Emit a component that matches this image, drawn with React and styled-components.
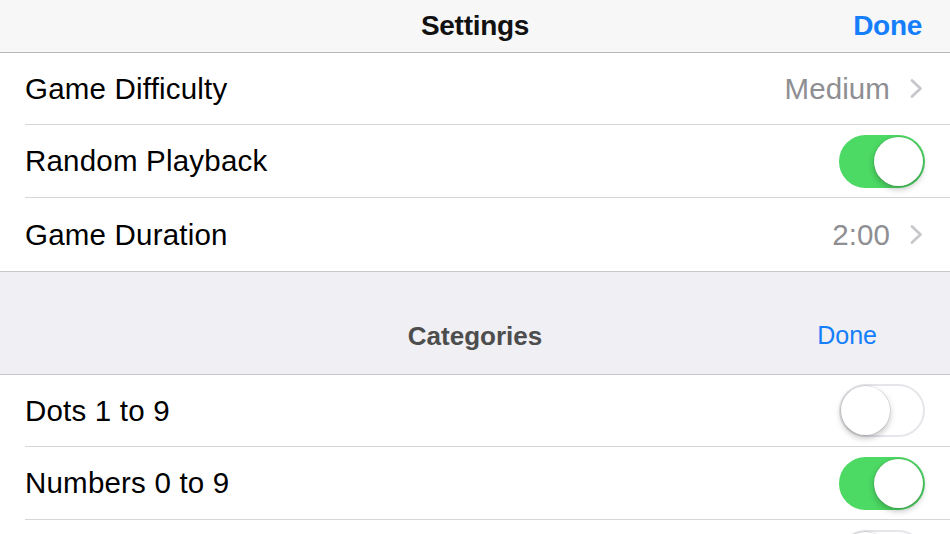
import React from "react";
import styled, { createGlobalStyle } from "styled-components";

const Global = createGlobalStyle`
  html, body { margin: 0; padding: 0; background: #ffffff; }
  body { font-family: "Liberation Sans", Arial, sans-serif; overflow: hidden; }
  * { box-sizing: border-box; }
`;

const Page = styled.div`
  width: 950px;
  height: 534px;
  overflow: hidden;
  background: #ffffff;
`;

const NavBar = styled.div`
  height: 53px;
  background: #f7f7f7;
  border-bottom: 1px solid #b8b8b8;
  display: grid;
  grid-template-columns: 1fr auto 1fr;
  align-items: center;
  padding: 0 28px 1px 28px;
`;

const NavTitle = styled.div`
  font-size: 28px;
  font-weight: 700;
  color: #111111;
  letter-spacing: -0.3px;
`;

const NavAction = styled.div`
  justify-self: end;
  font-size: 28px;
  font-weight: 700;
  color: #157efb;
  letter-spacing: -0.3px;
`;

const Group = styled.div`
  background: #ffffff;
  border-bottom: ${(p) => (p.$bottom ? "1px solid #c8c7cc" : "none")};
`;

const Row = styled.div`
  height: ${(p) => p.$h || 73}px;
  margin-left: 25px;
  padding-right: 26px;
  display: flex;
  align-items: center;
  border-bottom: ${(p) => (p.$last ? "none" : "1px solid #d6d6da")};
`;

const Label = styled.div`
  flex: 1;
  font-size: 29.5px;
  color: #000000;
  letter-spacing: 0.2px;
`;

const Value = styled.div`
  font-size: 29.5px;
  color: #8e8e93;
  margin-right: 19px;
  letter-spacing: 0.1px;
`;

const Chevron = () => (
  <svg width="15" height="21" viewBox="0 0 15 21">
    <path d="M3 2.5 L11.5 10.5 L3 18.5" fill="none" stroke="#c7c7cc" strokeWidth="2.8" strokeLinecap="round" strokeLinejoin="round" />
  </svg>
);

const Track = styled.div`
  position: relative;
  width: 86px;
  height: 53px;
  border-radius: 27px;
  background: ${(p) => (p.$on ? "#4cd964" : "#ffffff")};
  box-shadow: inset 0 0 0 ${(p) => (p.$on ? "0" : "2px")} #e5e5ea;
  margin-right: -1px;
`;

const Knob = styled.div`
  position: absolute;
  top: 2px;
  left: ${(p) => (p.$on ? "35px" : "2px")};
  width: 49px;
  height: 49px;
  border-radius: 50%;
  background: #ffffff;
  box-shadow: 0 3px 6px rgba(0, 0, 0, 0.25), 0 0 0 0.5px rgba(0, 0, 0, 0.15);
`;

const Toggle = ({ on }) => (
  <Track $on={on}>
    <Knob $on={on} />
  </Track>
);

const SectionHeader = styled.div`
  height: 103px;
  background: #efeff4;
  border-bottom: 1px solid #c8c7cc;
  display: grid;
  grid-template-columns: 1fr auto 1fr;
  align-items: end;
  padding: 0 25px 22px 25px;
`;

const SectionTitle = styled.div`
  font-size: 26px;
  font-weight: 700;
  color: #4d4d4d;
`;

const SectionAction = styled.div`
  justify-self: end;
  margin: 0 48px 2px 0;
  font-size: 25px;
  color: #157efb;
`;

export default function App() {
  return (
    <Page>
      <Global />
      <NavBar>
        <div />
        <NavTitle>Settings</NavTitle>
        <NavAction>Done</NavAction>
      </NavBar>
      <Group $bottom>
        <Row $h={72}>
          <Label>Game Difficulty</Label>
          <Value>Medium</Value>
          <Chevron />
        </Row>
        <Row>
          <Label>Random Playback</Label>
          <Toggle on />
        </Row>
        <Row $last>
          <Label>Game Duration</Label>
          <Value>2:00</Value>
          <Chevron />
        </Row>
      </Group>
      <SectionHeader>
        <div />
        <SectionTitle>Categories</SectionTitle>
        <SectionAction>Done</SectionAction>
      </SectionHeader>
      <Group>
        <Row $h={72}>
          <Label>Dots 1 to 9</Label>
          <Toggle on={false} />
        </Row>
        <Row>
          <Label>Numbers 0 to 9</Label>
          <Toggle on />
        </Row>
        <Row>
          <Label />
          <Toggle on={false} />
        </Row>
      </Group>
    </Page>
  );
}
